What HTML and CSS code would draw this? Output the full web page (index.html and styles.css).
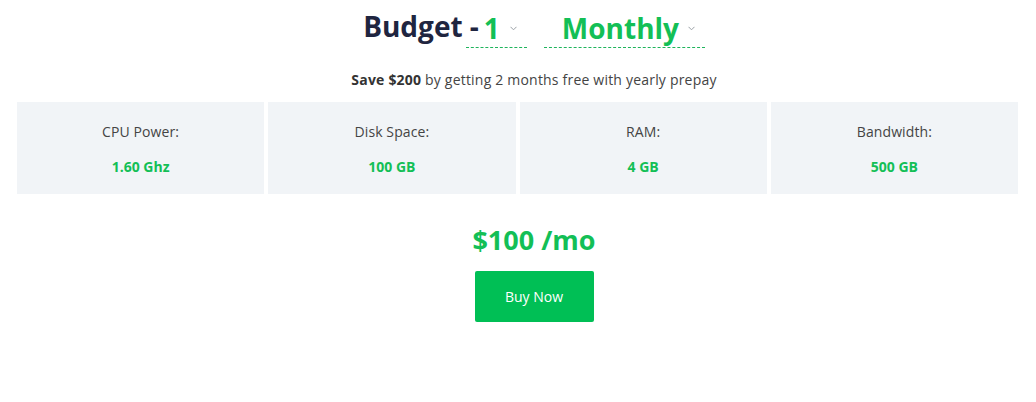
FILE: index.html
```html
<!DOCTYPE html>
<html>
<head>
<meta charset="utf-8">
<link rel="stylesheet" href="styles.css">
</head>
<body>
<div class="page">
  <div class="heading shifted">
    <span class="title">Budget -</span>
    <div class="picker picker-plan">
      <span class="picker-value">1</span>
      <svg class="chev" width="7" height="5" viewBox="0 0 7 5"><path d="M0.5 0.8 L3.5 3.8 L6.5 0.8" fill="none" stroke="#9aa0a6" stroke-width="1"/></svg>
    </div>
    <div class="picker picker-term">
      <span class="picker-value">Monthly</span>
      <svg class="chev" width="7" height="5" viewBox="0 0 7 5"><path d="M0.5 0.8 L3.5 3.8 L6.5 0.8" fill="none" stroke="#9aa0a6" stroke-width="1"/></svg>
    </div>
  </div>
  <p class="save shifted"><b>Save $200</b> by getting 2 months free with yearly prepay</p>
  <div class="specs">
    <div class="spec"><div class="spec-label">CPU Power:</div><div class="spec-value">1.60 Ghz</div></div>
    <div class="spec"><div class="spec-label">Disk Space:</div><div class="spec-value">100 GB</div></div>
    <div class="spec"><div class="spec-label">RAM:</div><div class="spec-value">4 GB</div></div>
    <div class="spec"><div class="spec-label">Bandwidth:</div><div class="spec-value">500 GB</div></div>
  </div>
  <div class="price shifted">$100 /mo</div>
  <div class="buy-wrap shifted"><button class="buy">Buy Now</button></div>
</div>
</body>
</html>
```

FILE: styles.css
```css
* { box-sizing: border-box; }
html, body { margin: 0; padding: 0; background: #fff; }
body { font-family: "Open Sans", "Noto Sans", sans-serif; color: #444; }
.page { padding: 0 18px 0 17px; }
.shifted { padding-left: 33px; }
.heading {
  display: flex;
  justify-content: center;
  align-items: flex-end;
  height: 48px;
}
.title {
  font-size: 28px;
  font-weight: 700;
  color: #1f2540;
  line-height: 38px;
  padding-bottom: 3px;
}
.picker {
  display: flex;
  align-items: center;
  border-bottom: 1px dashed #1fb45c;
  height: 41px;
  padding-left: 18px;
  padding-right: 10px;
}
.picker-plan { width: 61px; margin-left: -13px; }
.picker-term { width: 161px; margin-left: 17px; }
.picker-value {
  font-size: 28px;
  font-weight: 700;
  color: #13bf56;
  line-height: 38px;
  margin-top: 2px;
}
.chev { margin-left: auto; margin-top: 2px; }
.save {
  margin: 22px 0 0;
  text-align: center;
  font-size: 14px;
  letter-spacing: 0.2px;
  line-height: 20px;
  color: #444;
}
.save b { color: #333; }
.specs {
  display: grid;
  grid-template-columns: repeat(4, 1fr);
  gap: 4px;
  margin-top: 12px;
}
.spec {
  background: #f1f4f7;
  height: 92px;
  text-align: center;
  padding-top: 20px;
}
.spec-label { font-size: 14px; letter-spacing: 0.1px; line-height: 20px; color: #444; }
.spec-value {
  font-size: 14px;
  line-height: 20px;
  font-weight: 700;
  color: #13bf56;
  margin-top: 15px;
}
.price {
  text-align: center;
  font-size: 27px;
  font-weight: 700;
  color: #13bf56;
  line-height: 34px;
  margin-top: 29px;
}
.buy-wrap { display: flex; justify-content: center; margin-top: 14px; }
.buy {
  width: 119px;
  height: 51px;
  background: #00bf55;
  border: none;
  border-radius: 2px;
  color: #fff;
  font-family: "Open Sans", "Noto Sans", sans-serif;
  font-size: 14px;
}
```
